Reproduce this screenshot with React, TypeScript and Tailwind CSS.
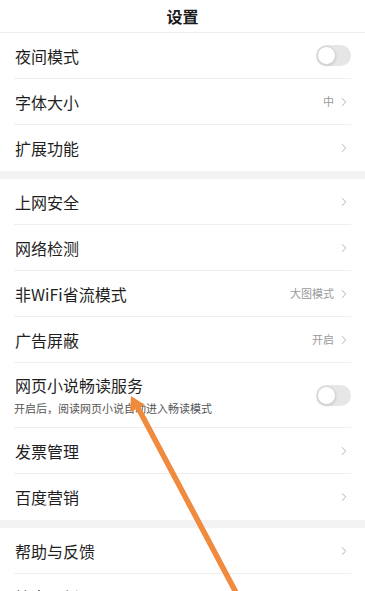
import { ChevronRight } from 'lucide-react';

type Row = { label: string; value?: string; toggle?: boolean; sub?: string };

const groups: Row[][] = [
  [
    { label: '夜间模式', toggle: true },
    { label: '字体大小', value: '中' },
    { label: '扩展功能' },
  ],
  [
    { label: '上网安全' },
    { label: '网络检测' },
    { label: '非WiFi省流模式', value: '大图模式' },
    { label: '广告屏蔽', value: '开启' },
    { label: '网页小说畅读服务', toggle: true, sub: '开启后，阅读网页小说自动进入畅读模式' },
    { label: '发票管理' },
    { label: '百度营销' },
  ],
  [{ label: '帮助与反馈' }, { label: '检查更新' }],
];

function Toggle() {
  return (
    <div className="w-[35px] h-[21px] rounded-full bg-[#e6e6e6] flex items-center p-[1px]">
      <div className="w-[19px] h-[19px] rounded-full bg-white border border-[#d4d4d4] shadow-sm" />
    </div>
  );
}

function SettingRow({ row, last }: { row: Row; last: boolean }) {
  return (
    <div className="px-[14px]">
      <div
        className={`flex items-center justify-between ${row.sub ? 'h-[65px]' : 'h-[46px]'} ${
          last ? '' : 'border-b border-[#efefef]'
        }`}
      >
        <div className="flex flex-col">
          <span className="text-[16px] text-[#1f1f1f] leading-[20px] pl-[1px]">{row.label}</span>
          {row.sub && (
            <span className="text-[11px] text-[#555] leading-[14px] mt-[6px]">{row.sub}</span>
          )}
        </div>
        {row.toggle ? (
          <Toggle />
        ) : (
          <div className="flex items-center gap-[3px] text-[#9a9a9a]">
            {row.value && <span className="text-[11px]">{row.value}</span>}
            <ChevronRight className="w-[14px] h-[14px] text-[#a8a8a8]" strokeWidth={1.5} />
          </div>
        )}
      </div>
    </div>
  );
}

export default function App() {
  return (
    <div
      className="relative w-[365px] h-[591px] overflow-hidden bg-white"
      style={{ fontFamily: '"Noto Sans CJK SC", "Noto Sans", sans-serif' }}
    >
      <div className="h-[33px] flex items-center justify-center border-b border-[#eeeeee]">
        <span className="text-[16px] font-bold text-[#1a1a1a]">设置</span>
      </div>
      {groups.map((group, gi) => (
        <div key={gi}>
          {gi > 0 && <div className="h-[8px] bg-[#f3f3f3]" />}
          {group.map((row, ri) => (
            <SettingRow key={row.label} row={row} last={ri === group.length - 1 && gi < groups.length - 1} />
          ))}
        </div>
      ))}

      {/* annotation arrow */}
      <svg className="absolute inset-0 pointer-events-none" width="365" height="591" viewBox="0 0 365 591">
        <line x1="136" y1="404" x2="240" y2="600" stroke="#f08a3c" strokeWidth="5.5" strokeLinecap="round" />
        <polygon points="131,396 145,405 130,412" fill="#f08a3c" />
      </svg>
    </div>
  );
}
